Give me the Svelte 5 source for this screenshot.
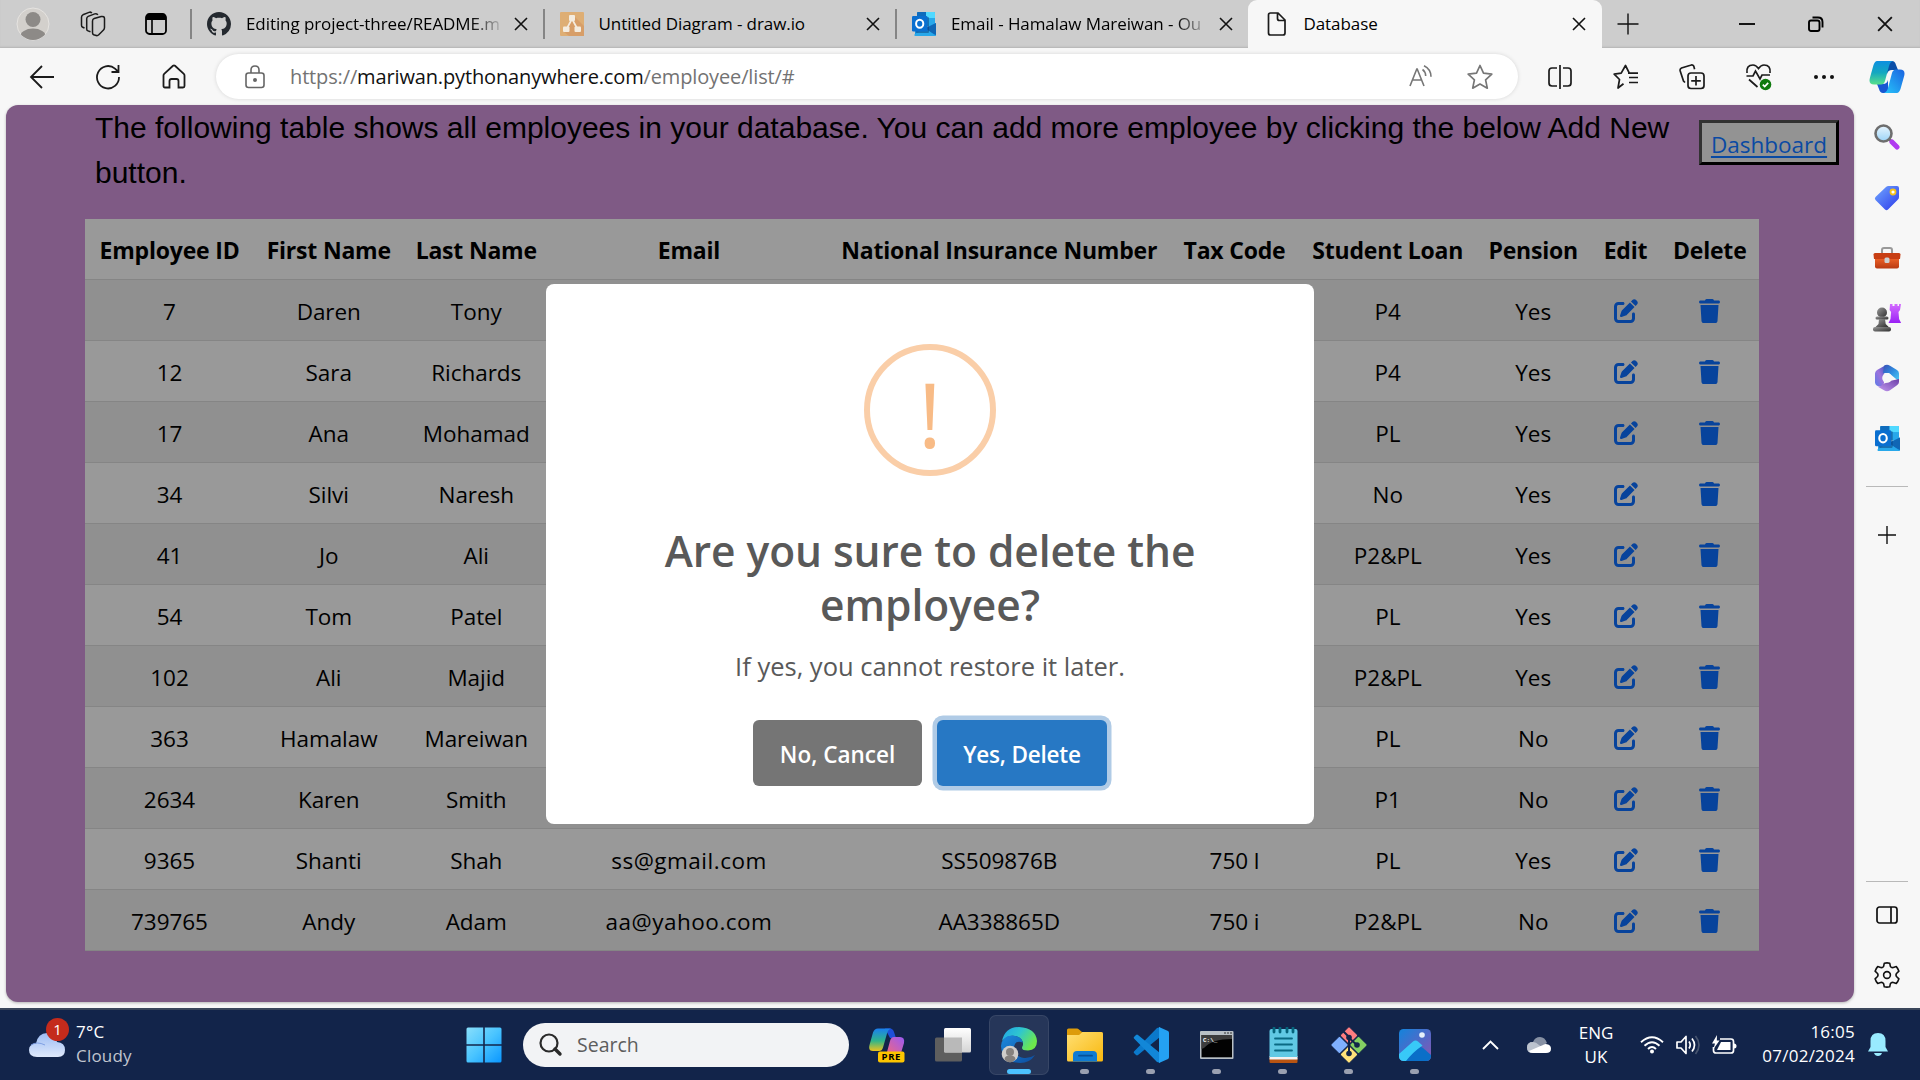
<script>
  const tabs = [
    { icon: 'github', title: 'Editing project-three/README.m', faded: true },
    { icon: 'drawio', title: 'Untitled Diagram - draw.io' },
    { icon: 'outlook', title: 'Email - Hamalaw Mareiwan - Ou', faded: true },
    { icon: 'file', title: 'Database', active: true }
  ];

  const columns = ['Employee ID', 'First Name', 'Last Name', 'Email', 'National Insurance Number', 'Tax Code', 'Student Loan', 'Pension', 'Edit', 'Delete'];

  const rows = [
    ['7', 'Daren', 'Tony', '', '', '', 'P4', 'Yes'],
    ['12', 'Sara', 'Richards', '', '', '', 'P4', 'Yes'],
    ['17', 'Ana', 'Mohamad', '', '', '', 'PL', 'Yes'],
    ['34', 'Silvi', 'Naresh', '', '', '', 'No', 'Yes'],
    ['41', 'Jo', 'Ali', '', '', '', 'P2&PL', 'Yes'],
    ['54', 'Tom', 'Patel', '', '', '', 'PL', 'Yes'],
    ['102', 'Ali', 'Majid', '', '', '', 'P2&PL', 'Yes'],
    ['363', 'Hamalaw', 'Mareiwan', '', '', '', 'PL', 'No'],
    ['2634', 'Karen', 'Smith', '', '', '', 'P1', 'No'],
    ['9365', 'Shanti', 'Shah', 'ss@gmail.com', 'SS509876B', '750 l', 'PL', 'Yes'],
    ['739765', 'Andy', 'Adam', 'aa@yahoo.com', 'AA338865D', '750 i', 'P2&PL', 'No']
  ];
</script>

{#snippet outlook(size)}
  <svg width={size} height={size} viewBox="0 0 24 24">
    <rect x="5" y="0" width="18" height="14" rx="1" fill="#28a8ea" />
    <path d="M5 1a1 1 0 0 1 1-1h8v6H5z" fill="#0f6cbd" />
    <path d="M14 0h8a1 1 0 0 1 1 1v5h-9z" fill="#50d9ff" />
    <path d="M14 6h9v6h-9z" fill="#28a8ea" />
    <path d="M3 12l10 4 11-5v12a1 1 0 0 1-1 1H4a1 1 0 0 1-1-1z" fill="#1490df" />
    <path d="M12 17l12-6v12z" fill="#1066b5" />
    <path d="M3 22l10-6 11 8H4a1 1 0 0 1-1-2z" fill="#28a8ea" />
    <rect x="4" y="5" width="13" height="16" rx="1" fill="#0a3c78" opacity=".5" />
    <rect x="0" y="4" width="15.5" height="15.5" rx="1.2" fill="#0a6fd0" />
    <ellipse cx="7.7" cy="11.7" rx="3.6" ry="4" fill="none" stroke="#fff" stroke-width="2" />
  </svg>
{/snippet}

{#snippet cross(size)}
  <svg width={size} height={size} viewBox="0 0 14 14"><path d="M1 1l12 12M13 1L1 13" stroke="#111" stroke-width="1.6" fill="none" /></svg>
{/snippet}

<div class="screen">
  <div class="tabstrip">
    <div class="strip-tools">
      <svg class="avatar" width="34" height="34" viewBox="0 0 34 34">
        <defs><clipPath id="av"><circle cx="17" cy="17" r="16" /></clipPath></defs>
        <circle cx="17" cy="17" r="16" fill="#d3d0cc" stroke="#e6e4e1" />
        <g clip-path="url(#av)" fill="#8d8a87"><circle cx="17" cy="12.5" r="7.5" /><ellipse cx="17" cy="30" rx="13" ry="8.5" /></g>
      </svg>
      <svg class="workspaces" width="26" height="26" viewBox="0 0 26 26" fill="none" stroke="#1b1b1b" stroke-width="1.5" stroke-linejoin="round">
        <path d="M12.500 10q0-2 1.700-2.500l7-2Q24.500 5 24.500 7.500v9q0 1.500-1 2.500l-5 5q-1 .9-2.300.5l-2.500-.8q-1.200-.5-1.200-2z" />
        <path d="M10.500 20.800l-2.500-.9q-1.300-.5-1.300-2V7.800q0-1.800 1.500-2.400l6.500-2.500q2.300-.8 3.100 1" />
        <path d="M4.500 17l-1.800-.8q-1.200-.5-1.200-2V6.300q0-1.800 1.400-2.500L9 1.400q2-.8 2.800.8" />
      </svg>
      <svg class="vertical" width="22" height="22" viewBox="0 0 22 22"><rect x="1" y="1" width="20" height="20" rx="3.500" fill="none" stroke="#000" stroke-width="1.800" /><path d="M1 4.500Q1 1 4.500 1h13Q21 1 21 4.500V7H1z" /><path d="M7 7v14" stroke="#000" stroke-width="1.600" /></svg>
    </div>
    {#each tabs as tab}
      <div class="tab" class:active={tab.active}>
        <span class="favicon">
          {#if tab.icon === 'github'}
            <svg width="24" height="24" viewBox="0 0 16 16"><path fill="#24292f" d="M8 0C3.580 0 0 3.580 0 8c0 3.540 2.290 6.530 5.470 7.590.4.070.55-.17.55-.38 0-.19-.01-.82-.01-1.490-2.010.37-2.530-.49-2.690-.94-.09-.23-.48-.94-.82-1.130-.28-.15-.68-.52-.01-.53.63-.01 1.080.58 1.230.82.72 1.210 1.870.87 2.330.66.07-.52.28-.87.51-1.070-1.780-.2-3.640-.89-3.640-3.950 0-.87.31-1.590.82-2.150-.08-.2-.36-1.020.08-2.120 0 0 .67-.21 2.200.82.64-.18 1.320-.27 2-.27s1.360.09 2 .27c1.530-1.040 2.200-.82 2.200-.82.44 1.100.16 1.920.08 2.120.51.56.82 1.270.82 2.150 0 3.070-1.870 3.750-3.650 3.950.29.25.54.73.54 1.480 0 1.070-.01 1.930-.01 2.200 0 .21.15.46.55.38A8.010 8.010 0 0 0 16 8c0-4.420-3.580-8-8-8z" /></svg>
          {:else if tab.icon === 'drawio'}
            <svg width="24" height="24" viewBox="0 0 24 24"><rect width="24" height="24" rx="1" fill="#deae74" /><path d="M14 4l10 10v10H9l-6-5z" fill="#d79e68" /><path d="M12 7L6.500 17M12 7l5.500 10" stroke="#f4ecdf" stroke-width="1.700" /><g fill="#f4ecdf"><rect x="9" y="3" width="6" height="6" rx="1" /><rect x="3" y="14.500" width="6.500" height="5.500" rx="1" /><rect x="14.500" y="14.500" width="6.500" height="5.500" rx="1" /></g></svg>
          {:else if tab.icon === 'outlook'}
            {@render outlook(24)}
          {:else}
            <svg width="24" height="24" viewBox="0 0 24 24" fill="none" stroke="#1b1b1b" stroke-width="1.700"><path d="M3.500 3q0-2 2-2h7.500l7 7v13q0 2-2 2h-12.500q-2 0-2-2zM12.500 1v5.500q0 2 2 2h5.500" /></svg>
          {/if}
        </span>
        <span class="title" class:faded={tab.faded}>{tab.title}</span>
        {@render cross(14)}
      </div>
    {/each}
    <div class="window">
      <svg width="22" height="22" viewBox="0 0 22 22"><path d="M11 .5v21M.5 11h21" stroke="#111" stroke-width="1.400" /></svg>
      <svg class="min" width="16" height="16" viewBox="0 0 16 16"><path d="M0 8h16" stroke="#000" stroke-width="1.800" /></svg>
      <svg class="restore" width="16" height="16" viewBox="0 0 16 16" fill="none" stroke="#000" stroke-width="1.900"><rect x="1" y="4.500" width="10.500" height="10.500" rx="2" /><path d="M4.500 1.500h5.500q4.500 0 4.500 4.500v5.500" /></svg>
      {@render cross(16)}
    </div>
  </div>

  <div class="toolbar">
    <div class="nav">
      <svg width="26" height="26" viewBox="0 0 26 26"><path d="M25 13H2M13 2L2 13l11 11" /></svg>
      <svg width="26" height="26" viewBox="0 0 26 26"><path d="M24 13A11 11.200 0 1 1 20 4.600L23 7.500M23.500 1v7h-7" /></svg>
      <svg width="26" height="26" viewBox="0 0 26 26"><path d="M2.500 11.500q0-1 .7-1.700L12 1.800q1-.8 2 0l8.800 8q.7.700.7 1.700V22q0 1.500-1.500 1.500h-4.500V17q0-2-2-2h-5q-2 0-2 2v6.500H4Q2.500 23.500 2.500 22z" /></svg>
    </div>
    <div class="address">
      <svg width="20" height="24" viewBox="0 0 20 24" fill="none" stroke="#666" stroke-width="1.600"><rect x="1" y="8" width="18" height="14.500" rx="2.500" /><path d="M6 8V5q0-4 4-4t4 4v3" /><circle cx="10" cy="15" r="1.200" fill="#666" /></svg>
      <span class="url">https://<b>mariwan.pythonanywhere.com</b>/employee/list/#</span>
      <svg class="aloud" width="24" height="24" viewBox="0 0 24 24" fill="none" stroke="#767676" stroke-width="1.600"><path d="M1 21L7.800 4h.4L15 21M3.500 15h9" /><path d="M13.500 4.500q3 2 3.200 6.500M15 .8q7 3.500 7 11" /></svg>
      <svg width="26" height="26" viewBox="0 0 26 26" fill="none" stroke="#767676" stroke-width="1.700" stroke-linejoin="round"><path d="M13 1.500l3.500 7.700 8.300 1-6.200 5.700 1.700 8.300L13 20l-7.300 4.200 1.700-8.300L1.200 10.200l8.300-1z" /></svg>
    </div>
    <div class="actions">
      <svg width="26" height="26" viewBox="0 0 26 26"><path d="M13 1v24M10 4H5Q2 4 2 7v12q0 3 3 3h5M16 4h5q3 0 3 3v12q0 3-3 3h-5" /></svg>
      <svg width="26" height="26" viewBox="0 0 26 26"><path d="M10.500 19.800L5 24l1.500-8.500L1.200 10.200l7-1L12.500 1.500l3.800 7.700H24M16 13.500h9M16 18.500h9M15 9.200h10" stroke-linejoin="round" /></svg>
      <svg width="26" height="26" viewBox="0 0 26 26"><rect x="9" y="9" width="16" height="15.500" rx="3" /><path d="M17 12v9.500M12.200 16.800h9.600M6 18.500L4.500 17 1.200 7q-.6-2 1.300-3l9-2.800q2.300-.8 3.300 1l.8 3" /></svg>
      <svg width="28" height="28" viewBox="0 0 28 28"><path d="M2 10Q1 2 8 2q3 0 5.500 3.500Q16 2 19 2q7 0 6 8M1.500 13H8l2.500-5 4.500 8 2-4h8M4 16.500L12.500 24" /><circle cx="20.500" cy="21.500" r="5.800" fill="#0e7a0d" stroke="none" /><path d="M17.800 21.700l1.900 1.800 3.500-3.700" stroke="#fff" /></svg>
      <svg width="22" height="6" viewBox="0 0 22 6"><circle class="dot" cx="3" cy="3" r="2" /><circle class="dot" cx="11" cy="3" r="2" /><circle class="dot" cx="19" cy="3" r="2" /></svg>
    </div>
    <svg class="copilot" width="36" height="34" viewBox="0 0 36 34">
      <defs>
        <linearGradient id="c1" x1="0" y1="0" x2="0" y2="1"><stop offset="0" stop-color="#0d8fe0" /><stop offset=".5" stop-color="#14a8c0" /><stop offset="1" stop-color="#58e08a" /></linearGradient>
        <linearGradient id="c2" x1="1" y1="0" x2="0" y2="1"><stop offset="0" stop-color="#1a63e0" /><stop offset="1" stop-color="#27c5fb" /></linearGradient>
      </defs>
      <path d="M17 1h6q3 0 4 4l2 5h-6q-4 0-5 4z" fill="#0b4fa8" /><path d="M19 33h-5q-3 0-4-4l-2-5h6q4 0 5-4z" fill="#1857d2" />
      <path d="M8 1h16q-3 1-4 5l-4 15q-1 3.500-4 3.500H5q-6 0-4-7L4.500 5Q6 1 8 1z" fill="url(#c1)" />
      <path d="M28 33H15q3-1 4-5l4-15q1-3.500 4-3.500h4q6 0 4 7L31.500 29Q30 33 28 33z" fill="url(#c2)" />
    </svg>
  </div>

  <div class="body">
    <main class="page">
      <div class="intro">
        <p>The following table shows all employees in your database. You can add more employee by clicking the below Add New button.</p>
        <button class="dashboard">Dashboard</button>
      </div>
      <div class="table">
        <div class="row head">
          {#each columns as c}<span>{c}</span>{/each}
        </div>
        {#each rows as row}
          <div class="row">
            {#each row as cell}<span>{cell}</span>{/each}
            <span><svg width="24" height="24" viewBox="0 0 512 512"><path d="M471.600 21.700c-21.900-21.900-57.300-21.900-79.200 0L362.300 51.700l97.900 97.900 30.100-30.100c21.900-21.900 21.900-57.300 0-79.200L471.600 21.700zm-299.200 220c-6.100 6.100-10.800 13.600-13.500 21.900l-29.600 88.800c-2.900 8.600-.6 18.100 5.800 24.600s15.900 8.700 24.600 5.800l88.800-29.600c8.200-2.700 15.700-7.400 21.900-13.500L437.700 172.300 339.700 74.300 172.400 241.700zM96 64C43 64 0 107 0 160V416c0 53 43 96 96 96H352c53 0 96-43 96-96V320c0-17.700-14.300-32-32-32s-32 14.300-32 32v96c0 17.700-14.300 32-32 32H96c-17.700 0-32-14.300-32-32V160c0-17.700 14.300-32 32-32h96c17.700 0 32-14.300 32-32s-14.300-32-32-32H96z" /></svg></span>
            <span><svg width="21" height="24" viewBox="0 0 448 512"><path d="M135.200 17.700L128 32H32C14.300 32 0 46.300 0 64S14.300 96 32 96H416c17.700 0 32-14.300 32-32s-14.300-32-32-32H320l-7.200-14.300C307.400 6.800 296.300 0 284.200 0H163.800c-12.100 0-23.200 6.800-28.600 17.700zM416 128H32L53.200 467c1.600 25.300 22.600 45 47.900 45H346.900c25.300 0 46.300-19.700 47.900-45L416 128z" /></svg></span>
          </div>
        {/each}
      </div>

      <div class="modal">
        <div class="warn"><span>!</span></div>
        <h2>Are you sure to delete the<br />employee?</h2>
        <p>If yes, you cannot restore it later.</p>
        <div class="buttons">
          <button class="cancel">No, Cancel</button>
          <button class="confirm">Yes, Delete</button>
        </div>
      </div>
    </main>

    <aside class="sidebar">
      <div class="apps">
        <svg width="26" height="26" viewBox="0 0 26 26">
          <defs><linearGradient id="lens" x1="0" y1="0" x2="0" y2="1"><stop offset="0" stop-color="#e9f6ff" /><stop offset="1" stop-color="#9bd3f7" /></linearGradient></defs>
          <path d="M14 14l4 4" stroke="#777" stroke-width="3" /><path d="M18 18l5 5" stroke="#b03af0" stroke-width="5" stroke-linecap="round" /><circle cx="9.500" cy="9.500" r="8" fill="url(#lens)" stroke="#6e6e6e" stroke-width="2.600" />
        </svg>
        <svg width="26" height="26" viewBox="0 0 26 26">
          <defs><linearGradient id="tag" x1="0" y1="0" x2="1" y2="1"><stop offset="0" stop-color="#72a8ff" /><stop offset="1" stop-color="#2b39ea" /></linearGradient></defs>
          <path d="M12 2q1-1 2.500-1H23q2 0 2 2v9q0 1.500-1 2.600L14 24.500q-1.500 1.500-3 0L1.500 15q-1.300-1.500 0-3z" fill="url(#tag)" /><circle cx="19" cy="7" r="2.500" fill="#fff" stroke="#f6c21a" stroke-width="1.800" />
        </svg>
        <svg width="28" height="22" viewBox="0 0 28 22">
          <defs><linearGradient id="box" x1="0" y1="0" x2="0" y2="1"><stop offset="0" stop-color="#f4672b" /><stop offset="1" stop-color="#b83a12" /></linearGradient></defs>
          <path d="M9 6V3q0-2 2-2h6q2 0 2 2v3" fill="none" stroke="#999" stroke-width="2" /><rect x="2" y="10" width="24" height="11.500" rx="2" fill="url(#box)" /><path d="M2 6h24q1.500 0 1.500 1.500L27 12H1L.5 7.500Q.5 6 2 6z" fill="#c83f14" /><rect x="11.500" y="10.500" width="5" height="5.500" rx="1.500" fill="#ccd0d2" />
        </svg>
        <svg width="28" height="28" viewBox="0 0 28 28">
          <defs><linearGradient id="pawn" x1="0" y1="0" x2="1" y2="1"><stop offset="0" stop-color="#9a9a9a" /><stop offset="1" stop-color="#2e2e2e" /></linearGradient><linearGradient id="rook" x1="0" y1="0" x2="0" y2="1"><stop offset="0" stop-color="#d36cff" /><stop offset="1" stop-color="#9a20f5" /></linearGradient></defs>
          <path d="M17 0h2.500v2h2V0h3v2h1.500V0H28l-1 6-1.500 2 .6 7 2 4H15.500l2-4 .6-7-1.500-2z" fill="url(#rook)" /><g fill="url(#pawn)"><circle cx="9" cy="8.500" r="5" /><rect x="2.500" y="12.500" width="13" height="3" rx="1.500" /><path d="M6 15h6l.7 5 3 3H2.500l3-3z" /><rect x="0" y="23" width="18" height="4.500" rx="2" /></g>
        </svg>
        <svg width="26" height="28" viewBox="0 0 26 28">
          <defs><linearGradient id="m1" x1="0" y1="1" x2="1" y2="0"><stop offset="0" stop-color="#5a7ce8" /><stop offset=".5" stop-color="#9d72dc" /><stop offset="1" stop-color="#3554bd" /></linearGradient><linearGradient id="m2" x1="0" y1="0" x2="1" y2="1"><stop offset="0" stop-color="#3a4fb5" /><stop offset=".5" stop-color="#2f8de0" /><stop offset="1" stop-color="#51cdf4" /></linearGradient><linearGradient id="m3" x1="0" y1="1" x2="1" y2="0"><stop offset="0" stop-color="#c39af0" /><stop offset="1" stop-color="#6c3fa8" /></linearGradient></defs>
          <path d="M12 1L3 6Q1 7.500 1 9.500v9q0 2 2 3.300l5 1.200 2-4V11z" fill="url(#m1)" /><path d="M10 1.700q3-1.800 6 0l7 4.300q2 1.300 2 3.500v8L15 9H9z" fill="url(#m2)" /><path d="M25 15v3q0 2-2 3.300l-7 5q-3 1.800-6 0L3.500 22.500Q7 23 9 20l9-3.500z" fill="url(#m3)" /><circle cx="13" cy="14" r="4.800" fill="#f7f7f7" />
        </svg>
        {@render outlook(25)}
        <hr />
        <svg width="18" height="18" viewBox="0 0 18 18"><path d="M9 0v18M0 9h18" stroke="#111" stroke-width="1.400" /></svg>
      </div>
      <div class="bottom">
        <hr />
        <svg width="22" height="18" viewBox="0 0 22 18" fill="none" stroke="#111" stroke-width="1.700"><rect x="1" y="1" width="20" height="16" rx="2.500" /><path d="M15 1v16" /></svg>
        <svg width="26" height="26" viewBox="0 0 26 26" fill="none" stroke="#111" stroke-width="1.600" stroke-linejoin="round"><path d="M10.300 1.200Q13 .5 15.700 1.200l.7 3.200q1 1.600 2.900 1.100l3-.9q1.900 2.100 2.600 4.600l-2.400 2.300q-1 1.500 0 3l2.400 2.300q-.7 2.500-2.600 4.600l-3-.9q-1.900-.4-2.900 1.100l-.7 3.200q-2.700.7-5.400 0l-.7-3.200q-1-1.500-2.900-1.100l-3 .9Q1.800 19.300 1.100 16.800l2.400-2.300q1-1.500 0-3L1.100 9.200q.7-2.500 2.600-4.600l3 .9q1.900.5 2.900-1.100z" /><circle cx="13" cy="13" r="3.400" /></svg>
      </div>
    </aside>
  </div>

  <footer class="taskbar">
    <div class="weather">
      <svg width="36" height="26" viewBox="0 0 36 26">
        <defs><linearGradient id="cl" x1="0" y1="0" x2="0" y2="1"><stop offset="0" stop-color="#9cbcf4" /><stop offset="1" stop-color="#dfe9fb" /></linearGradient></defs>
        <path d="M8 25q-8 0-8-7 0-6 7-6.500Q9 1 18 1q8 0 10 9 8 .5 8 8 0 7-7 7z" fill="url(#cl)" /><path d="M2 13q6-4 14 0" stroke="#7fa0e4" fill="none" />
      </svg>
      <span class="badge">1</span>
      <div class="weather-text"><span>7°C</span><span class="dim">Cloudy</span></div>
    </div>
    <div class="center">
      <svg class="start" width="36" height="36" viewBox="0 0 36 36">
        <defs><linearGradient id="win" gradientUnits="userSpaceOnUse" x1="0" y1="0" x2="36" y2="36"><stop offset="0" stop-color="#8be0fb" /><stop offset=".5" stop-color="#49c4ff" /><stop offset="1" stop-color="#0895ff" /></linearGradient></defs>
        <g fill="url(#win)"><path d="M2 .5h15.200v16.700H.5V2Q.5.5 2 .5zM18.800.5H34q1.500 0 1.500 1.500v15.200H18.800zM.5 18.800h16.700v16.700H2Q.5 35.500.5 34zM18.800 18.800h16.700V34q0 1.500-1.500 1.500H18.800z" /></g>
      </svg>
      <div class="search">
        <svg width="24" height="24" viewBox="0 0 24 24" fill="none" stroke="#2a2a2a"><circle cx="10" cy="10" r="8.500" stroke-width="2.200" /><path d="M16 16l5 5" stroke-width="3.400" stroke-linecap="round" /></svg>
        <span>Search</span>
      </div>
      <div class="app first">
        <svg width="36" height="36" viewBox="0 0 36 36">
          <defs><linearGradient id="p1" x1="0" y1="0" x2="0" y2="1"><stop offset="0" stop-color="#1a7ff0" /><stop offset=".55" stop-color="#2fb58a" /><stop offset="1" stop-color="#ecc21c" /></linearGradient><linearGradient id="p2" x1="1" y1="0" x2="0" y2="1"><stop offset="0" stop-color="#9a5af5" /><stop offset="1" stop-color="#ff6a6a" /></linearGradient></defs>
          <path d="M16 1.500h5q3 0 4 3.500l2 6h-6z" fill="#1e4fd8" /><path d="M9 1.500h13q-3 1-4 5l-4 14q-1 3.500-4 3.500H4q-5 0-3.500-6L4 5.500Q5.500 1.500 9 1.500z" fill="url(#p1)" /><path d="M27 30H14q3-1 4-5l3-11q1-4 4-4h6q5 0 4 6l-3 10q-1 4-5 4z" fill="url(#p2)" />
          <rect x="9" y="24.500" width="26.500" height="11" rx="2" fill="#fdc500" /><text x="22.300" y="33.400" text-anchor="middle" class="pre">PRE</text>
        </svg>
      </div>
      <div class="app">
        <svg width="36" height="34" viewBox="0 0 36 34"><defs><linearGradient id="tv" x1="0" y1="0" x2="0" y2="1"><stop offset="0" stop-color="#fff" /><stop offset="1" stop-color="#d4d4d4" /></linearGradient></defs><rect x="0" y="9.500" width="27" height="24" rx="1.500" fill="#5e5e5e" /><rect x="9" y="0" width="27" height="24.500" rx="1.500" fill="url(#tv)" /><path d="M9 9.500h18v15H10.500Q9 24.500 9 23z" fill="#b9b9b9" /></svg>
      </div>
      <div class="app current">
        <svg width="36" height="36" viewBox="0 0 36 36">
          <defs><linearGradient id="e1" x1="0" y1="0" x2="1" y2=".5"><stop offset="0" stop-color="#1fa2e8" /><stop offset=".5" stop-color="#2fc6cf" /><stop offset="1" stop-color="#6de84c" /></linearGradient><linearGradient id="e2" x1="0" y1="0" x2="1" y2="1"><stop offset="0" stop-color="#1c8ade" /><stop offset="1" stop-color="#0c4c9e" /></linearGradient></defs>
          <path d="M1 14Q4 0 18 0q17 1 18 14 0 9-9 9.500-6 0-6-2.500 0-1 1-3 .5-6-6-8.500Q8 7 1 14z" fill="url(#e1)" /><path d="M0 19q1-10 11-10.500 9 .500 11 7-8-3-9 5 0 9 10 10.500 6 .500 11-3-5 8-15 8Q1 35 0 19z" fill="url(#e2)" />
          <circle cx="9" cy="27" r="8.300" fill="#d0cdca" /><circle cx="9" cy="25" r="4" fill="#85817e" /><path d="M3.500 32.500q0-4 5.500-4t5.500 4q-2.500 2.800-5.500 2.800t-5.500-2.800z" fill="#85817e" />
        </svg><i></i>
      </div>
      <div class="app">
        <svg width="36" height="34" viewBox="0 0 36 34"><defs><linearGradient id="fo" x1="0" y1="0" x2="1" y2="1"><stop offset="0" stop-color="#ffdf73" /><stop offset="1" stop-color="#f9b80e" /></linearGradient></defs><path d="M0 2Q0 .5 1.500.5H10q1 0 2 1l3 2.500H34q2 0 2 2v8H0z" fill="#dd9c0a" /><path d="M0 7h12l3.500-3H34q2 0 2 2v26q0 1.500-1.500 1.500h-33Q0 33.500 0 32z" fill="url(#fo)" /><path d="M6 33.500V27q0-4 4-4h16q4 0 4 4v6.500z" fill="#0f7bd2" /><path d="M12 27.700h13" stroke="#075198" stroke-width="1.800" stroke-linecap="round" /></svg><i></i>
      </div>
      <div class="app">
        <svg width="36" height="36" viewBox="0 0 36 36"><path d="M1 24.500L24 1l3-.8V10L5 28q-1 .8-2 0l-2-2q-.7-.8 0-1.500z" fill="#0b79cb" /><path d="M1 11.500L24 35l3 .8V26L5 8q-1-.8-2 0l-2 2q-.7.800 0 1.500z" fill="#1287d8" /><path d="M26 0l9 4q1 .5 1 2v24q0 1.500-1 2l-9 4z" fill="#24a1f2" /></svg><i></i>
      </div>
      <div class="app">
        <svg width="34" height="28" viewBox="0 0 34 28"><rect width="33.500" height="28" rx="1" fill="#b9c0c5" /><path d="M1.500 4h30.500v22.300H1.500z" fill="#020202" /><path d="M1.500 4H32v4Q12 8 4 17l-2.500 1z" fill="#3d3d3d" /><path d="M24 2h2M27 2h2M30 2h2" stroke="#333" /><text x="3" y="11" class="cmd">C:\_</text></svg><i></i>
      </div>
      <div class="app">
        <svg width="29" height="36" viewBox="0 0 29 36"><path d="M.5 31h28v4q0 1-1 1h-26q-1 0-1-1z" fill="#b85412" /><path d="M.5 29h28v3.500H.5z" fill="#f2f2f2" /><path d="M.5 4q0-2 2-2h24q2 0 2 2v26H.5z" fill="#61c9e4" /><path d="M5 1v4M11 1v4M18 1v4M24 1v4" stroke="#06647c" stroke-width="2.800" stroke-linecap="round" /><path d="M6 11.500h17M6 17.500h17M6 23.500h17" stroke="#0a6a83" stroke-width="1.800" stroke-linecap="round" /></svg><i></i>
      </div>
      <div class="app">
        <svg width="36" height="36" viewBox="0 0 36 36"><g stroke="#12244a" stroke-width="1"><rect x="11.500" y="2" width="13" height="13" rx="1.500" transform="rotate(45 18 8.500)" fill="#ff7d80" /><rect x="2" y="11.500" width="13" height="13" rx="1.500" transform="rotate(45 8.500 18)" fill="#7fb0ff" /><rect x="21" y="11.500" width="13" height="13" rx="1.500" transform="rotate(45 27.500 18)" fill="#84cf63" /><rect x="11.500" y="21" width="13" height="13" rx="1.500" transform="rotate(45 18 27.500)" fill="#ffe27a" /></g><path d="M12 4l6 6v18M18 11l8 7" stroke="#12244a" stroke-width="2" fill="none" /><g fill="#12244a"><circle cx="18" cy="10.500" r="2.800" /><circle cx="26" cy="18" r="2.800" /><circle cx="18" cy="26.500" r="2.800" /></g></svg><i></i>
      </div>
      <div class="app">
        <svg width="32" height="32" viewBox="0 0 32 32"><defs><linearGradient id="ph" x1="0" y1="0" x2="1" y2="1"><stop offset="0" stop-color="#1284dc" /><stop offset=".6" stop-color="#5a66c4" /><stop offset="1" stop-color="#8c55b0" /></linearGradient><clipPath id="phc"><rect width="32" height="32" rx="4.500" /></clipPath></defs><g clip-path="url(#phc)"><rect width="32" height="32" fill="url(#ph)" /><path d="M4 32l15-13q2.500-2 5 0l8 7v6z" fill="#0a6fc8" /><path d="M0 25l14-12.500q2.500-2 5 0l4.500 4Q14 23 7 32H0z" fill="#38c9f8" /><circle cx="23" cy="6" r="2.800" fill="#e6f1fb" /></g></svg><i></i>
      </div>
    </div>
    <div class="tray">
      <svg class="chev" width="17" height="10" viewBox="0 0 17 10"><path d="M1 9l7.500-7.500L16 9" fill="none" stroke="#fff" stroke-width="1.900" /></svg>
      <svg class="cloud" width="24" height="17" viewBox="0 0 24 17"><path d="M6 16q-6 0-6-5.500Q0 5 6 5 8 0 13 0q5 0 7 6l-8 5z" fill="#8791a4" /><path d="M6 16q-6 0-6-5.500Q0 5 6 5q3 0 6 3l4 3-6 5z" fill="#bcc3ce" /><path d="M2 14l14-6q2-1.500 4-.8 4 .8 4 4.500Q24 16 19 16H6q-3 0-4-2z" fill="#fff" /></svg>
      <div class="lang"><span>ENG</span><span>UK</span></div>
      <svg class="wifi" width="24" height="18" viewBox="0 0 24 18" fill="none" stroke="#fff" stroke-width="1.900"><path d="M1 6.200Q12-3.500 23 6.200M4.500 9.700q7.500-7 15 0M8 13q4-4 8 0" /><circle cx="12" cy="15.500" r="2" fill="#fff" stroke="none" /></svg>
      <svg class="volume" width="25" height="20" viewBox="0 0 25 20" fill="none" stroke="#fff" stroke-width="1.700"><path d="M1 7h4l5-5.500v17L5 13H1z" stroke-linejoin="round" /><path d="M13 6.500q2.500 3.500 0 7M16 3.500q5 6.500 0 13" /><path d="M19.500 1q7 9 0 18" stroke="#46546f" /></svg>
      <svg class="battery" width="25" height="20" viewBox="0 0 25 20" fill="none" stroke="#fff" stroke-width="1.700"><path d="M8 4h11q2.500 0 2.500 2.500v9Q21.500 18 19 18H4q-2.500 0-2.500-2.500V12" /><path d="M9 7h9.500v8H5z" fill="#fff" stroke="none" /><path d="M22 8.500q2.500 0 2.500 2.500T22 13.500z" fill="#fff" stroke="none" /><path d="M5 0L0 8.500h3L1.500 14 7.500 5.500H4.800z" fill="#fff" stroke="none" /></svg>
      <div class="clock"><span>16:05</span><span>07/02/2024</span></div>
      <svg class="bell" width="20" height="24" viewBox="0 0 20 24" fill="#99ebff"><path d="M10 0q7.500 0 7.500 8v6l2.500 4.500H0L2.500 14V8Q2.500 0 10 0zM6 20h8q-1 3-4 3t-4-3z" /></svg>
    </div>
  </footer>
</div>

<style>
  :global(body) { margin: 0; overflow: hidden; }
  * { box-sizing: border-box; }
  .screen {
    width: 1920px; height: 1080px; display: flex; flex-direction: column;
    background: #f7f7f7; color: #000; overflow: hidden;
    font-family: "Open Sans", "Noto Sans", sans-serif;
  }
  svg { display: block; flex: none; }

  .tabstrip { height: 48px; flex: none; display: flex; background: #cdcdcd; box-shadow: inset 0 -2px 2px -1px #b4b4b4; }
  .strip-tools { width: 190px; display: flex; align-items: center; padding-left: 16px; }
  .workspaces { margin-left: 30px; }
  .vertical { margin-left: 39px; }
  .tab { width: 352.5px; display: flex; align-items: center; padding: 0 15px; }
  .tab::before { content: ""; width: 2px; height: 30px; background: #858585; margin-left: -15px; margin-right: 15px; }
  .tab.active { background: #f7f7f7; width: 354px; border-radius: 9px 9px 0 0; padding-right: 16px; }
  .tab.active::before { background: transparent; }
  .favicon { width: 24px; margin-right: 15px; }
  .title { width: 256px; margin-right: 12px; padding-bottom: 2px; font-size: 17px; letter-spacing: -.08px; white-space: nowrap; }
  .faded { mask-image: linear-gradient(90deg, #000 88%, transparent 101%); }
  .window { display: flex; align-items: center; padding-left: 15px; }
  .min { margin-left: 100px; }
  .restore { margin-left: 53px; margin-right: 53px; }

  .toolbar { height: 57px; flex: none; display: flex; align-items: center; }
  .nav { display: flex; width: 216px; padding-left: 29px; gap: 40px; fill: none; stroke: #1b1b1b; stroke-width: 1.8; }
  .address { width: 1302px; height: 45px; border-radius: 23px; background: #fff; box-shadow: 0 0 4px #0002; display: flex; align-items: center; padding: 0 25px 0 29px; }
  .url { flex: 1; padding-left: 25px; padding-bottom: 1px; font-size: 20px; color: #737373; letter-spacing: -.14px; }
  .url b { color: #111; font-weight: 400; }
  .aloud { margin-right: 34px; }
  .actions { display: flex; align-items: center; gap: 40px; padding-left: 29px; fill: none; stroke: #1b1b1b; stroke-width: 1.7; }
  .dot { fill: #111; stroke: none; }
  .copilot { margin-left: 34px; }

  .body { height: 903px; flex: none; display: flex; padding-left: 6px; }
  .page { width: 1848px; height: 897px; border-radius: 12px; background: #7f5a85; position: relative; box-shadow: 0 1px 3px #0004; }
  .intro { height: 114px; display: flex; padding: 0 15px 0 89px; align-items: flex-start; justify-content: space-between; }
  .intro p { margin: 0; width: 1590px; font: 30px/45px "Liberation Sans", Arial, sans-serif; }
  .dashboard { margin-top: 15px; width: 140px; height: 45px; padding: 3px 0 0; border: 3px solid; border-color: #323232 #000 #000 #323232; background: #939393; color: #0a4aa3; font: 22.5px "Open Sans", sans-serif; text-decoration: underline; text-underline-offset: 3px; }

  .table { width: 1674px; margin-left: 79px; font-size: 22.5px; }
  .row { display: grid; grid-template-columns: 169px 149.5px 145.5px 280px 340.5px 130px 176.5px 114.500px 70px 98.500px; height: 61px; padding-top: 2px; align-items: center; justify-items: center; background: #999; border-bottom: 1px solid #858585; fill: #07439c; letter-spacing: -.05px; }
  .row:nth-child(even) { background: #909090; }
  .row span { white-space: nowrap; }
  .row:not(.head) span:nth-child(4) { letter-spacing: .5px; }
  .head { font-weight: 700; font-size: 23px; letter-spacing: -.2px; }

  .modal { position: absolute; left: 540px; top: 179px; width: 768px; height: 540px; border-radius: 8px; background: #fff; color: #595959; display: flex; flex-direction: column; align-items: center; padding-top: 60px; }
  .warn { width: 132px; height: 132px; border: 6px solid #facea8; border-radius: 50%; color: #f8bb86; font-size: 90px; line-height: 127px; text-align: center; }
  h2 { margin: 48px 0 0; font-size: 42.5px; line-height: 54px; font-weight: 600; text-align: center; letter-spacing: -.05px; }
  .modal p { margin: 14px 0 0; font-size: 25.5px; line-height: 40px; }
  .buttons { display: flex; gap: 15px; margin-top: 34px; }
  .buttons button { width: 169px; height: 66px; padding: 2px 0 0; border: 0; border-radius: 6px; background: #757575; color: #fff; font: 600 22.500px "Open Sans", sans-serif; white-space: nowrap; }
  .buttons .confirm { width: 170px; background: #2778c4; box-shadow: 0 0 0 4.500px #b0cbe6; letter-spacing: -.2px; }

  .sidebar { width: 66px; display: flex; flex-direction: column; justify-content: space-between; }
  .apps { display: grid; grid-template-rows: 61px 61px 60px 60px 60px 60px 36px 62px; place-items: center; padding-top: 1px; }
  .bottom { display: flex; flex-direction: column; align-items: center; gap: 24px; padding-bottom: 20px; }
  .bottom svg + svg { margin-top: 14px; }
  hr { width: 42px; height: 1px; margin: 0; border: 0; background: #b9b9b9; }

  .taskbar { height: 72px; flex: none; border-top: 2px solid #3a465b; background: #12244a; display: flex; color: #fff; font-size: 17px; line-height: 24px; }
  .weather { width: 465px; display: flex; align-items: center; padding-left: 29px; position: relative; }
  .badge { position: absolute; left: 46px; top: 8px; width: 23px; height: 23px; border-radius: 50%; background: #c42b1c; text-align: center; line-height: 22px; font-size: 15px; }
  .weather-text { margin-left: 11px; padding-bottom: 2px; display: flex; flex-direction: column; letter-spacing: .2px; }
  .dim { color: #c0c5cf; }
  .center { display: flex; align-items: center; }
  .start { margin-left: 1px; }
  .search { width: 326px; height: 44px; margin-left: 21px; border-radius: 22px; background: #f2f3f5; color: #5d5d5d; display: flex; align-items: center; gap: 14px; padding-left: 16px; font-size: 19.5px; }
  .app { width: 66px; height: 60px; display: flex; align-items: center; justify-content: center; position: relative; }
  .app.first { margin-left: 5px; }
  .current { width: 60px; margin: 0 3px; border: 1px solid #ffffff14; border-radius: 7px; background: #ffffff16; }
  .app i { position: absolute; bottom: 1px; left: 28px; width: 9px; height: 5px; border-radius: 3px; background: #9aa0b0; }
  .app.current i { left: 17px; width: 24px; bottom: 0; background: #4cc2ff; }
  .pre { font: 700 9.500px "Open Sans", sans-serif; letter-spacing: .6px; }
  .cmd { font: 700 6px "Liberation Mono", monospace; fill: #fff; }
  .tray { display: flex; align-items: center; padding-left: 34px; }
  .cloud { margin-left: 28px; }
  .lang, .clock { display: flex; flex-direction: column; padding-bottom: 1px; }
  .lang { margin-left: 27px; width: 36px; align-items: center; }
  .wifi { margin-left: 26px; }
  .volume { margin-left: 12px; }
  .battery { margin-left: 11px; }
  .clock { margin-left: 20px; width: 98px; align-items: flex-end; white-space: nowrap; letter-spacing: .25px; padding-bottom: 2px; }
  .bell { margin-left: 13px; }
</style>
